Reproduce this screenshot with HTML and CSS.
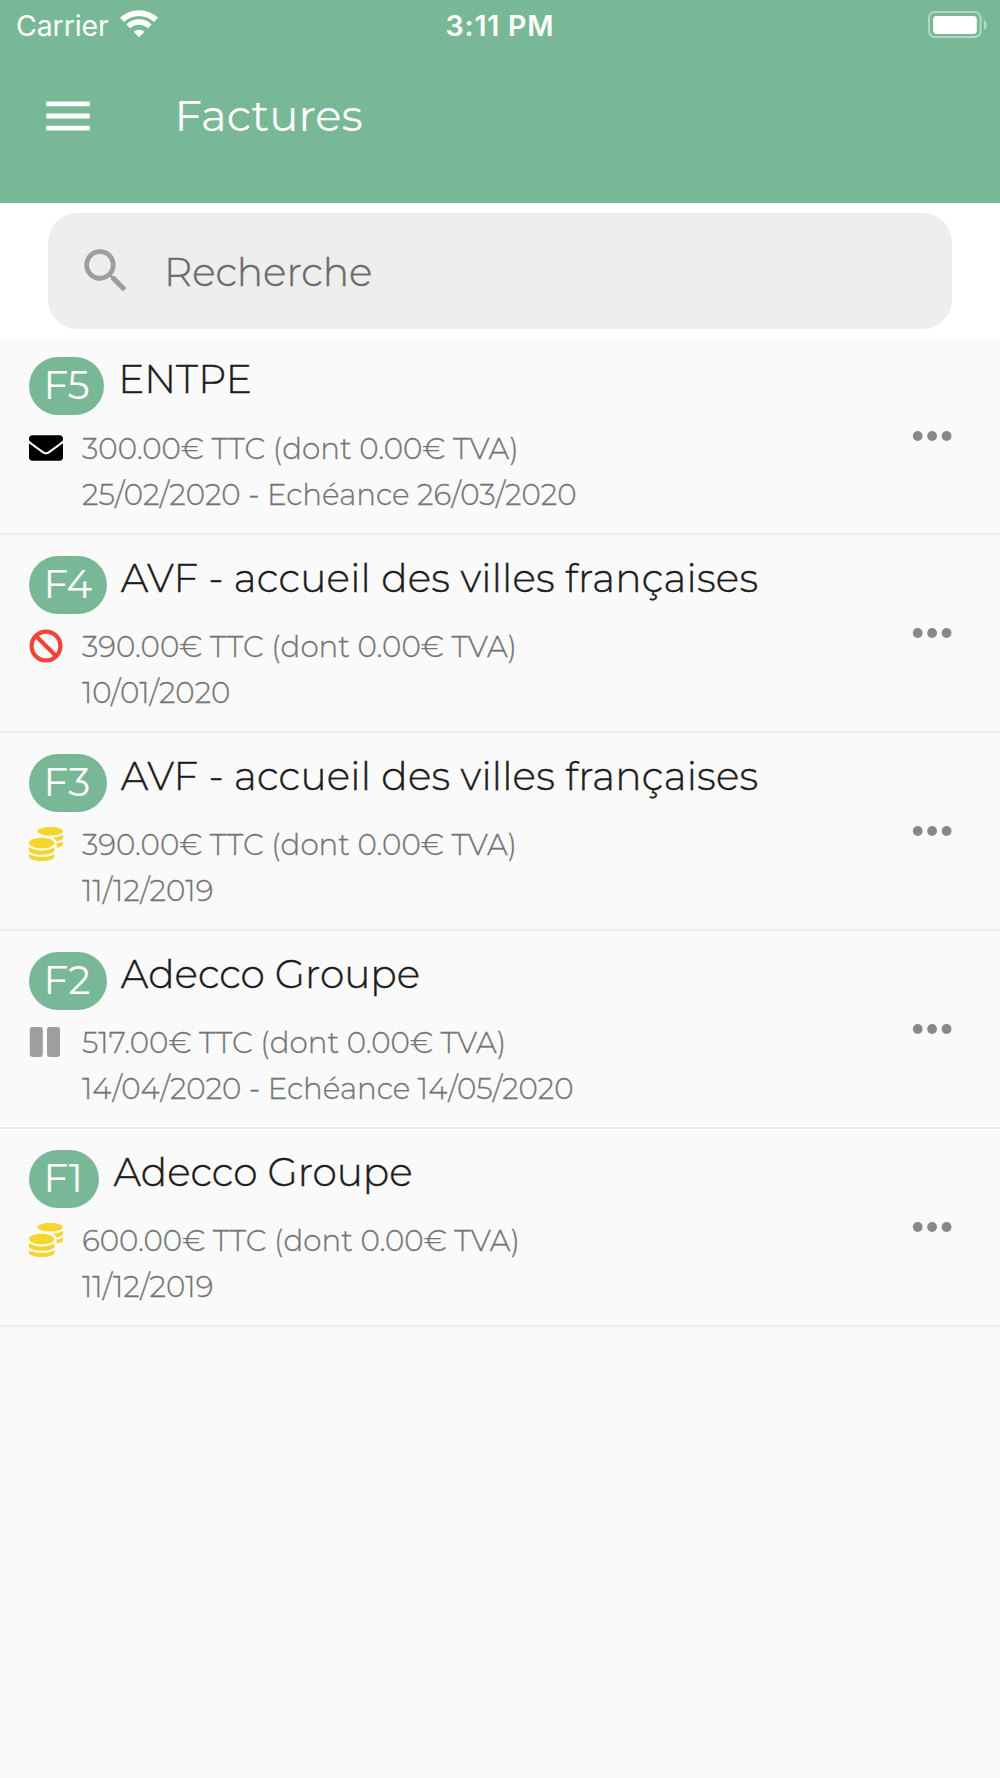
FILE: index.html
```html
<!DOCTYPE html>
<html lang="fr">
<head>
  <meta charset="UTF-8">
  <title>Factures</title>
  <link rel="stylesheet" href="styles.css">
</head>
<body>

<!-- Icons -->
<svg class="hidden">
  <symbol id="dots" viewBox="0 0 40 10">
    <circle cx="5.7" cy="5" r="4.9"/><circle cx="20.1" cy="5" r="4.9"/><circle cx="34.6" cy="5" r="4.9"/>
  </symbol>
  <symbol id="envelope" viewBox="0 0 512 512">
    <path d="M502.3 190.8c3.9-3.1 9.7-.2 9.7 4.7V400c0 26.5-21.5 48-48 48H48c-26.5 0-48-21.5-48-48V195.6c0-5 5.7-7.8 9.7-4.7 22.4 17.4 52.1 39.5 154.1 113.6 21.1 15.4 56.7 47.8 92.2 47.6 35.7.3 72-32.8 92.3-47.6 102-74.1 131.6-96.3 154-113.7zM256 320c23.2.4 56.6-29.2 73.4-41.4 132.7-96.3 142.8-104.7 173.4-128.7 5.8-4.5 9.2-11.5 9.2-18.9v-19c0-26.5-21.5-48-48-48H48c-26.5 0-48 21.5-48 48v19c0 7.4 3.4 14.3 9.2 18.9 30.6 23.9 40.7 32.4 173.4 128.7 16.8 12.2 50.2 41.8 73.4 41.4z"/>
  </symbol>
  <symbol id="ban" viewBox="0 0 34 34">
    <g fill="none" stroke="currentColor" stroke-width="4.2"><circle cx="17" cy="17" r="14.4"/><path d="M7 7l20 20"/></g>
  </symbol>
  <symbol id="coins" viewBox="0 0 512 512">
    <path d="M0 405.3V448c0 35.3 86 64 192 64s192-28.7 192-64v-42.7C342.7 434.4 267.2 448 192 448S41.3 434.4 0 405.3zM320 128c106 0 192-28.7 192-64S426 0 320 0 128 28.7 128 64s86 64 192 64zM0 300.4V352c0 35.3 86 64 192 64s192-28.7 192-64v-51.6c-41.3 34-116.9 51.6-192 51.6S41.3 334.4 0 300.4zm416 11c57.3-11.1 96-31.7 96-55.4v-42.7c-23.2 16.4-57.3 27.6-96 34.5v63.6zM192 160C86 160 0 195.8 0 240s86 80 192 80 192-35.8 192-80-86-80-192-80zm219.3 56.3c60-10.8 100.7-32 100.7-56.3v-42.7c-35.5 25.1-96.5 38.6-160.7 41.8 29.5 14.3 51.2 33.5 60 57.2z"/>
  </symbol>
  <symbol id="pause" viewBox="0 0 34 34">
    <rect x="0.8" y="2" width="13" height="30" rx="2.4"/><rect x="18" y="2" width="13" height="30" rx="2.4"/>
  </symbol>
</svg>

<header>
  <div class="status">
    <div class="carrier">
      <span>Carrier</span>
      <svg class="wifi" viewBox="0 0 38 28">
        <g fill="none" stroke="#fff">
          <path d="M2 9.9a24.6 24.6 0 0 1 34 0" stroke-width="5.8"/>
          <path d="M8.2 16.4a15.6 15.6 0 0 1 21.6 0" stroke-width="5.4"/>
        </g>
        <path d="M19 27.3l-5.4-5.5a7.8 7.8 0 0 1 10.8 0z" fill="#fff"/>
      </svg>
    </div>
    <div class="time">3:11 PM</div>
    <svg class="battery" viewBox="0 0 60 28">
      <rect x="1" y="1.9" width="51.6" height="25.2" rx="6" fill="none" stroke="#fff" stroke-opacity=".45" stroke-width="2"/>
      <rect x="5.2" y="6" width="43.6" height="18" rx="3.4" fill="#fff"/>
      <path d="M56 9.7c3.9 2 3.9 8 0 10z" fill="#fff" fill-opacity=".45"/>
    </svg>
  </div>
  <div class="toolbar">
    <svg class="menu" viewBox="0 0 24 24"><path d="M3 18h18v-2H3v2zm0-5h18v-2H3v2zm0-7v2h18V6H3z"/></svg>
    <h1>Factures</h1>
  </div>
</header>

<div class="search">
  <div class="searchbox">
    <svg viewBox="0 0 24 24"><path d="M15.5 14h-.79l-.28-.27C15.41 12.59 16 11.11 16 9.5 16 5.91 13.09 3 9.5 3S3 5.91 3 9.5 5.91 16 9.5 16c1.61 0 3.09-.59 4.23-1.57l.27.28v.79l5 4.99L20.49 19l-4.99-5zm-6 0C7.01 14 5 11.99 5 9.5S7.01 5 9.5 5 14 7.01 14 9.5 11.99 14 9.5 14z"/></svg>
    <span>Recherche</span>
  </div>
</div>

<div class="list">
  <div class="item">
    <div class="infos">
      <div class="name"><span class="badge">F5</span><h2>ENTPE</h2></div>
      <div class="details">
        <svg class="icon sent"><use href="#envelope"/></svg>
        <p>300.00€ TTC (dont 0.00€ TVA)<br>25/02/2020 - Echéance 26/03/2020</p>
      </div>
    </div>
    <svg class="more"><use href="#dots"/></svg>
  </div>

  <div class="item">
    <div class="infos">
      <div class="name"><span class="badge">F4</span><h2 class="avf">AVF - accueil des villes françaises</h2></div>
      <div class="details">
        <svg class="icon canceled"><use href="#ban"/></svg>
        <p>390.00€ TTC (dont 0.00€ TVA)<br>10/01/2020</p>
      </div>
    </div>
    <svg class="more"><use href="#dots"/></svg>
  </div>

  <div class="item">
    <div class="infos">
      <div class="name"><span class="badge wide">F3</span><h2 class="avf">AVF - accueil des villes françaises</h2></div>
      <div class="details">
        <svg class="icon paid"><use href="#coins"/></svg>
        <p>390.00€ TTC (dont 0.00€ TVA)<br>11/12/2019</p>
      </div>
    </div>
    <svg class="more"><use href="#dots"/></svg>
  </div>

  <div class="item">
    <div class="infos">
      <div class="name"><span class="badge wide">F2</span><h2>Adecco Groupe</h2></div>
      <div class="details">
        <svg class="icon waiting"><use href="#pause"/></svg>
        <p>517.00€ TTC (dont 0.00€ TVA)<br>14/04/2020 - Echéance 14/05/2020</p>
      </div>
    </div>
    <svg class="more"><use href="#dots"/></svg>
  </div>

  <div class="item">
    <div class="infos">
      <div class="name"><span class="badge wide">F1</span><h2>Adecco Groupe</h2></div>
      <div class="details">
        <svg class="icon paid"><use href="#coins"/></svg>
        <p>600.00€ TTC (dont 0.00€ TVA)<br>11/12/2019</p>
      </div>
    </div>
    <svg class="more"><use href="#dots"/></svg>
  </div>
</div>

</body>
</html>
```
FILE: styles.css
```css
* {
  box-sizing: border-box;
}
body {
  margin: 0;
  min-height: 1778px;
  background-color: #fafafa;
  font-family: Montserrat, Inter, sans-serif;
  font-weight: 300;
}
h1, h2, p {
  margin: 0;
  font-weight: 300;
}
.hidden {
  display: none;
}

/* Header */
header {
  height: 203px;
  background-color: #79b897;
  color: #fff;
}
.status {
  display: grid;
  grid-template-columns: 1fr auto 1fr;
  align-items: center;
  height: 50px;
  padding: 0 12px;
  font-family: Inter, sans-serif;
  font-size: 28.5px;
  font-weight: 400;
}
.carrier {
  display: flex;
  align-items: center;
  gap: 11px;
  margin-left: 4px;
}
.carrier span {
  letter-spacing: -0.1px;
}
.wifi {
  width: 38px;
  height: 28px;
  margin-top: -3px;
}
.time {
  font-weight: 600;
  letter-spacing: 0.8px;
}
.battery {
  justify-self: end;
  width: 60px;
  height: 28px;
  margin-top: -3px;
}
.toolbar {
  display: flex;
  align-items: center;
  height: 132px;
  padding-left: 38.5px;
}
.menu {
  width: 58px;
  height: 58px;
  fill: #fff;
}
h1 {
  margin: -2px 0 0 78px;
  font-size: 43.5px;
  font-weight: 400;
}

/* Search */
.search {
  height: 135px;
  padding: 10px 48px 0;
  background-color: #fff;
}
.searchbox {
  display: flex;
  align-items: center;
  height: 116px;
  padding-left: 29px;
  border-radius: 29px;
  background-color: #eee;
  color: #6b6b6b;
  font-size: 39.1px;
  -webkit-text-stroke: 0.4px;
}
.searchbox svg {
  width: 58px;
  height: 58px;
  margin-right: 29px;
  fill: #9e9e9e;
}
.searchbox span {
  padding-top: 2px;
}

/* List */
.item {
  display: flex;
  align-items: center;
  height: 198px;
  padding: 0 48px 0 29px;
  border-bottom: 2px solid #ebebeb;
}
.item:first-child {
  height: 197px;
}
.infos {
  flex: 1;
  padding-top: 6px;
}
.item:first-child .infos {
  padding-top: 4px;
}
.name {
  display: flex;
  height: 58px;
}
.badge {
  height: 58px;
  padding: 0 14.5px;
  border-radius: 29px;
  background-color: #79b897;
  color: #fff;
  font-size: 39.1px;
  font-weight: 400;
  line-height: 56px;
}
.wide {
  padding-right: 16.5px;
}
h2 {
  margin-left: 14px;
  color: #1c1c1c;
  font-size: 39.1px;
  line-height: 45px;
  -webkit-text-stroke: 0.4px;
}
.avf {
  letter-spacing: 0.2px;
}
.details {
  display: flex;
  margin-top: 10.5px;
}
.icon {
  width: 34px;
  height: 34px;
  margin: 5px 19px 0 0;
}
.details p {
  color: #757575;
  font-size: 29.35px;
  line-height: 46px;
  -webkit-text-stroke: 0.3px;
}
.sent {
  fill: #000;
}
.canceled {
  color: #f44336;
}
.paid {
  fill: #f7d52f;
}
.waiting {
  fill: #9e9e9e;
}
.more {
  width: 40px;
  height: 10px;
  fill: #888;
}
```
